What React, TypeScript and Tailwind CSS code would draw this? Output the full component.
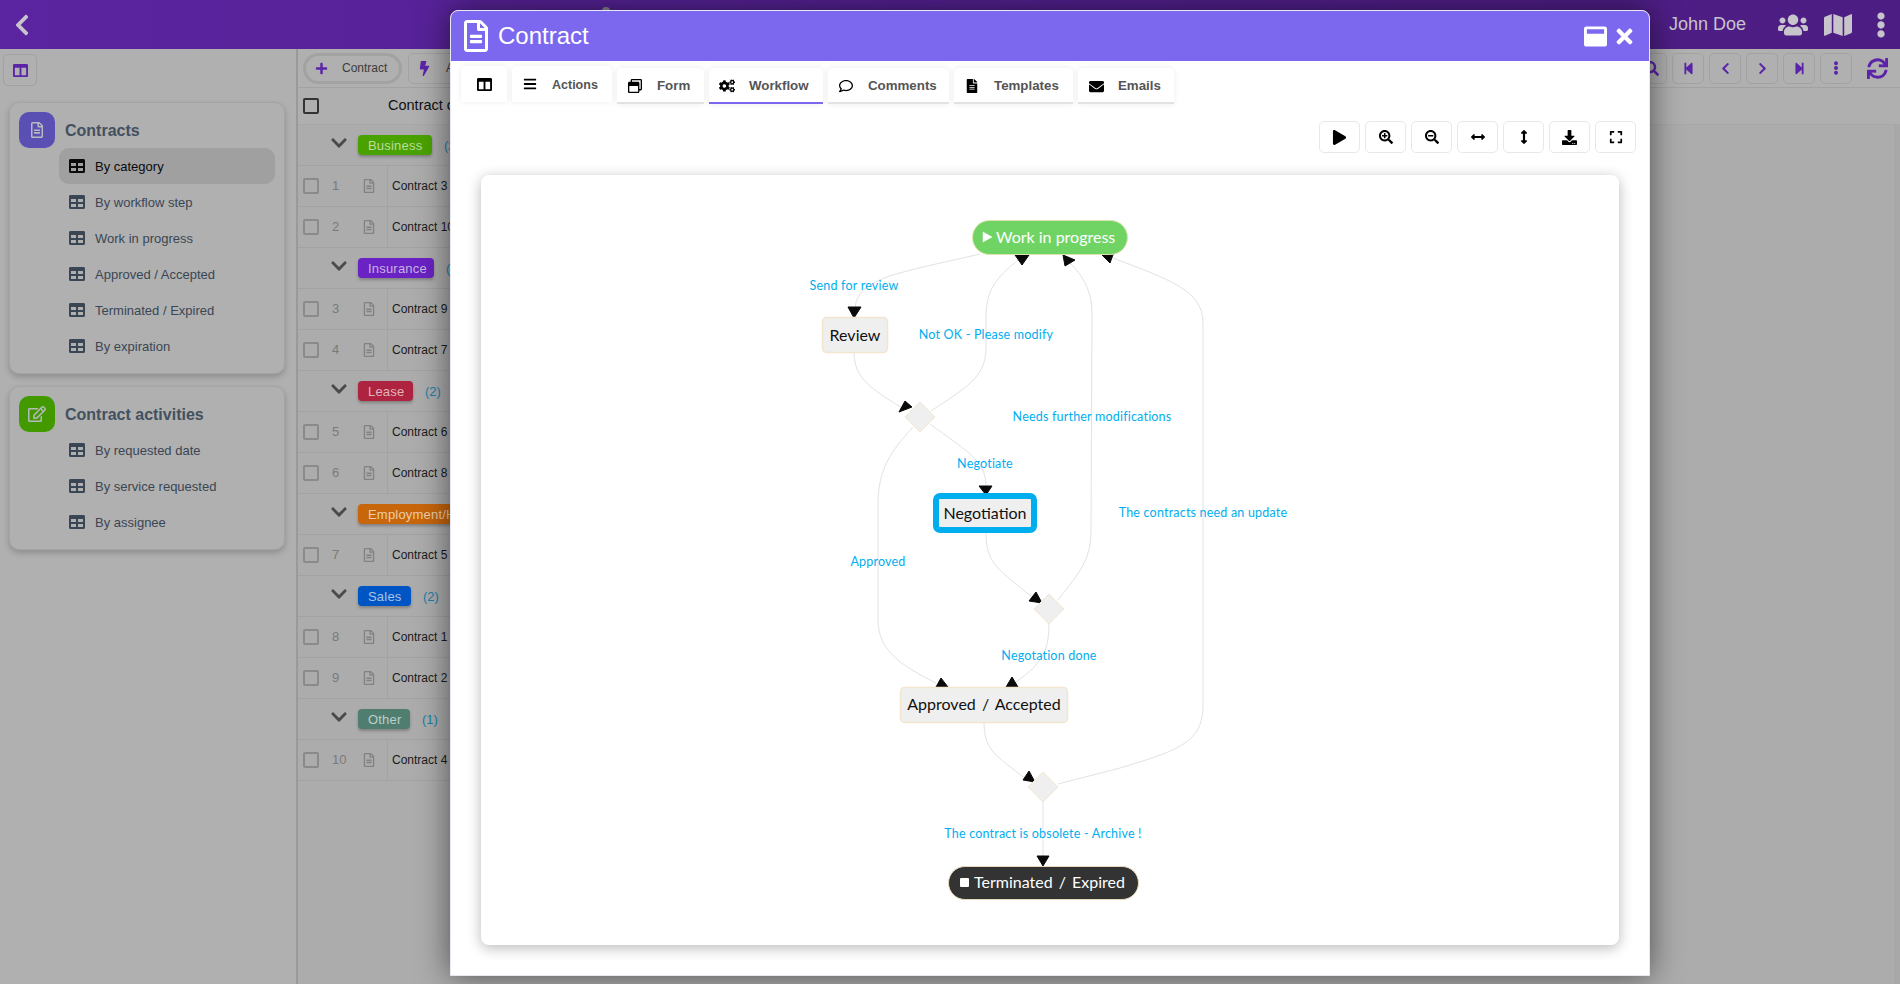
import React from "react";
import {
  FaChevronLeft, FaChevronRight, FaChevronDown, FaColumns, FaTable, FaRegFileAlt, FaFileAlt, FaRegEdit, FaPlus, FaBolt,
  FaBars, FaRegWindowRestore, FaCogs, FaRegComment, FaEnvelope, FaWindowMaximize, FaTimes, FaPlay, FaSearchPlus, FaSearchMinus,
  FaArrowsAltH, FaArrowsAltV, FaDownload, FaExpand, FaUsers, FaMap, FaEllipsisV, FaSearch, FaStepBackward, FaStepForward, FaSync,
} from "react-icons/fa";

function MenuCard({ icon, iconBg, title, items, active }: { icon: React.ReactNode; iconBg: string; title: string; items: string[]; active?: string }) {
  return (
    <div className="ml-[9px] mr-[11px] rounded-[10px] border border-[#a4a4a4] bg-[#b0b0b0] px-[9px] pt-[9px] pb-[9px] shadow-[0_3px_6px_rgba(0,0,0,0.2)]">
      <div className="flex h-9 items-center gap-[10px]">
        <div className={`flex h-9 w-9 items-center justify-center rounded-[10px] text-[#b8b8c0] ${iconBg}`}>{icon}</div>
        <span className="pt-[1px] text-[16px] font-bold text-[#44505f]">{title}</span>
      </div>
      {items.map((t) => (
        <div key={t} className={`ml-10 flex h-9 items-center gap-[10px] rounded-[10px] pl-[10px] text-[13px] ${t === active ? "bg-[#a0a0a0] text-[#0a0a0a]" : "text-[#3a4654]"}`}>
          <FaTable size={16} />
          <span className="pt-[2px]">{t}</span>
        </div>
      ))}
    </div>
  );
}

function Check() {
  return <div className="h-[16px] w-[16px] shrink-0 rounded-[2px] border-2 border-[#8a8a8a]" />;
}

function Row({ n, name }: { n: number; name: string }) {
  return (
    <div className="flex h-[41px] items-center border-b border-[#a2a2a2] pl-[5px]">
      <Check />
      <span className="w-[32px] pl-[13px] text-[13px] text-[#7a7a7a]">{n}</span>
      <div className="flex w-[36px] justify-center text-[#828282]"><FaRegFileAlt size={14} /></div>
      <div className="flex h-full items-center border-l border-[#a2a2a2] pl-[4px] text-[12px] whitespace-nowrap text-[#1a1a1a]">{name}</div>
    </div>
  );
}

function Group({ label, bg, text, count, w }: { label: string; bg: string; text: string; count: string; w: string }) {
  return (
    <div className="flex h-[41px] items-center border-b border-[#a2a2a2] pl-[27px]">
      <FaChevronDown size={18} className="mb-[4px] w-[28px] text-[#4a4a4a]" />
      <div className={`ml-[5px] flex h-[20px] shrink-0 items-center rounded-[4px] pl-[10px] pt-[2px] text-[13px] tracking-[0.2px] whitespace-nowrap shadow-[0_2px_3px_rgba(0,0,0,0.25)] ${bg} ${text} ${w}`}>{label}</div>
      <span className="ml-[12px] pt-[2px] text-[13px] text-[#1a7fa8]">{count}</span>
    </div>
  );
}

function ToolBtn({ children, className = "" }: { children: React.ReactNode; className?: string }) {
  return <div className={`flex h-[31px] items-center justify-center rounded-[5px] border border-[#a2a2a2] text-[#5b24a8] ${className}`}>{children}</div>;
}

function Tab({ icon, label, active, w }: { icon: React.ReactNode; label: string; active?: boolean; w: string }) {
  return (
    <div className={`flex h-[36px] items-center gap-[14px] rounded-t-[5px] border-b-2 bg-white pl-[10px] pt-[2px] text-[13.3px] font-bold text-[#555] shadow-[0_0_6px_rgba(0,0,0,0.08)] ${active ? "border-[#7b68ee]" : "border-[#e2e2e2]"} ${w}`}>
      <span className="flex w-[16px] justify-center text-black">{icon}</span>
      <span>{label}</span>
    </div>
  );
}

function DiaBtn({ children }: { children: React.ReactNode }) {
  return <div className="flex h-[32px] w-[41px] items-center justify-center rounded-[5px] border border-[#e8e8e8] bg-white text-black">{children}</div>;
}

const edges = [
  "M980 254 C950 261 925 266 900 273 C870 281 855 292 855 310",
  "M854 352 C854 378 870 388 902 408",
  "M931 411 C965 388 986 378 986 348 L986 317 C986 290 996 278 1018 260",
  "M1058 600 C1080 572 1091 560 1091 530 L1092 313 C1092 290 1082 275 1070 263",
  "M1058 784 L1120 768 C1180 750 1203 742 1203 705 L1203 323 C1203 290 1170 280 1113 258",
  "M930 424 C965 450 986 460 986 486",
  "M913 427 C890 452 878 470 878 505 L878 620 C878 650 900 665 936 683",
  "M986 533 C986 565 1000 570 1033 598",
  "M1049 623 C1049 655 1040 665 1012 685",
  "M984 722 C984 750 995 755 1026 779",
  "M1043 802 L1043 860",
];
const arrows = [
  "848,307 861,307 854,318",
  "899,412 912,407 905,401",
  "1015,255 1029,255 1022,265",
  "1063,255 1075,260 1065,266",
  "1102,255 1114,252 1110,263",
  "979,486 992,486 986,495",
  "936,687 948,687 941,678",
  "1029,601 1042,603 1036,592",
  "1006,687 1018,687 1012,677",
  "1023,780 1035,782 1029,771",
  "1037,856 1049,856 1043,866",
];
const labels: [string, number, number][] = [
  ["Send for review", 854, 290],
  ["Not OK - Please modify", 986, 339],
  ["Needs further modifications", 1092, 421],
  ["Negotiate", 985, 468],
  ["The contracts need an update", 1203, 517],
  ["Approved", 878, 566],
  ["Negotation done", 1049, 660],
  ["The contract is obsolete - Archive !", 1043, 838],
];
const diamonds = [[920, 417], [1049, 609], [1043, 787]];
const font = "Lato, 'Noto Sans', sans-serif";

function Workflow() {
  return (
    <svg viewBox="481 175 1138 770" className="block h-full w-full" style={{ fontFamily: font }}>
      {edges.map((d, i) => <path key={i} d={d} fill="none" stroke="#e2e2e2" strokeWidth={1} />)}
      {arrows.map((p, i) => <polygon key={i} points={p} fill="#0a0a0a" stroke="#0a0a0a" strokeLinejoin="round" />)}
      <rect x="972.5" y="220.5" width="155" height="34" rx="17" fill="#70d464" stroke="#dfe3b0" />
      <polygon points="983,232 983,242 992,237" fill="#fff" stroke="#fff" strokeWidth="0.5" />
      <text x="996" y="243" fontSize="16" fill="#fff">Work in progress</text>
      <rect x="822.5" y="317.5" width="65" height="35" rx="4" fill="#efefef" stroke="#f3e6cf" strokeWidth="1.5" />
      <text x="855" y="341" textAnchor="middle" fontSize="16" fill="#111">Review</text>
      <rect x="936" y="496" width="98" height="34" rx="4" fill="#efefef" stroke="#00adef" strokeWidth="6" />
      <text x="985" y="519" textAnchor="middle" fontSize="16" fill="#111">Negotiation</text>
      <rect x="900.5" y="687.5" width="167" height="35" rx="4" fill="#efefef" stroke="#f3e6cf" strokeWidth="1.5" />
      <text x="984" y="710" textAnchor="middle" fontSize="16" fill="#111" wordSpacing="2">Approved / Accepted</text>
      <rect x="948.5" y="866.5" width="190" height="33" rx="16.5" fill="#333" stroke="#e8d8b8" />
      <rect x="960" y="878" width="9" height="9" rx="1" fill="#fff" />
      <text x="974" y="888" fontSize="16" fill="#fff" wordSpacing="2">Terminated / Expired</text>
      {diamonds.map(([x, y], i) => (
        <polygon key={i} points={`${x - 15},${y} ${x},${y - 15} ${x + 15},${y} ${x},${y + 15}`} fill="#efefef" stroke="#f3e6cf" />
      ))}
      {labels.map(([t, x, y]) => <text key={t} x={x} y={y} textAnchor="middle" fontSize="12.5" letterSpacing="0.2" fill="#00aeef">{t}</text>)}
    </svg>
  );
}

export default function App() {
  const rows: React.ReactNode[] = [
    <Group key="g1" label="Business" bg="bg-[#4aa200]" text="text-[#b9dca0]" count="(2)" w="w-[74px]" />,
    <Row key="1" n={1} name="Contract 3" />,
    <Row key="2" n={2} name="Contract 10" />,
    <Group key="g2" label="Insurance" bg="bg-[#6a22c4]" text="text-[#c6b4e2]" count="(2)" w="w-[76px]" />,
    <Row key="3" n={3} name="Contract 9" />,
    <Row key="4" n={4} name="Contract 7" />,
    <Group key="g3" label="Lease" bg="bg-[#ae2440]" text="text-[#e0b4bc]" count="(2)" w="w-[55px]" />,
    <Row key="5" n={5} name="Contract 6" />,
    <Row key="6" n={6} name="Contract 8" />,
    <Group key="g4" label="Employment/HR" bg="bg-[#c8660c]" text="text-[#eccdaa]" count="(1)" w="w-[130px]" />,
    <Row key="7" n={7} name="Contract 5" />,
    <Group key="g5" label="Sales" bg="bg-[#0055c4]" text="text-[#aac4e6]" count="(2)" w="w-[53px]" />,
    <Row key="8" n={8} name="Contract 1" />,
    <Row key="9" n={9} name="Contract 2" />,
    <Group key="g6" label="Other" bg="bg-[#4f7d70]" text="text-[#bcd0ca]" count="(1)" w="w-[52px]" />,
    <Row key="10" n={10} name="Contract 4" />,
  ];
  return (
    <div className="relative h-[984px] w-[1900px] overflow-hidden bg-[#b0b0b0]" style={{ fontFamily: "'Liberation Sans', sans-serif" }}>
      <header className="flex h-[49px] items-center bg-gradient-to-r from-[#5b24a0] to-[#4c1d82] pl-[10px] pr-[6px] text-[#c8c4cc]">
        <FaChevronLeft size={24} />
        <div className="ml-auto flex items-center">
          <span className="text-[18px]">John Doe</span>
          <FaUsers size={30} className="ml-[32px]" />
          <FaMap size={28} className="ml-[16px]" />
          <FaEllipsisV size={26} className="ml-[16px]" />
        </div>
      </header>
      <div className="flex h-[935px]">
        <aside className="w-[296px] shrink-0">
          <div className="ml-[3px] mt-[5px] mb-[16px] flex h-[32px] w-[34px] items-center justify-center rounded-[5px] border border-[#a2a2a2] text-[#5b24a8]"><FaColumns size={15} /></div>
          <MenuCard icon={<FaRegFileAlt size={16} />} iconBg="bg-[#5a4fb3]" title="Contracts" active="By category" items={["By category", "By workflow step", "Work in progress", "Approved / Accepted", "Terminated / Expired", "By expiration"]} />
          <div className="h-3" />
          <MenuCard icon={<FaRegEdit size={18} />} iconBg="bg-[#429a00]" title="Contract activities" items={["By requested date", "By service requested", "By assignee"]} />
        </aside>
        <main className="flex min-w-0 flex-1 flex-col border-l-2 border-[#9a9a9a]">
          <div className="flex h-[39px] shrink-0 items-center border-b border-[#a2a2a2] pl-[5px] pr-[12px]">
            <div className="flex h-[31px] w-[99px] items-center rounded-full border-[3px] border-[#a2a2a2] pl-[9px] text-[12px] text-[#3c3c3c]">
              <FaPlus size={13} className="text-[#5b24a8]" /><span className="ml-[14px]">Contract</span>
            </div>
            <ToolBtn className="ml-[6px] w-[90px] justify-start pl-[8px]"><FaBolt size={15} /><span className="ml-[14px] text-[12px] text-[#3c3c3c]">Actions</span></ToolBtn>
            <div className="ml-auto flex items-center gap-[5px]">
              <ToolBtn className="w-[32px]"><FaSearch size={15} /></ToolBtn>
              <ToolBtn className="w-[32px]"><FaStepBackward size={13} /></ToolBtn>
              <ToolBtn className="w-[32px]"><FaChevronLeft size={13} /></ToolBtn>
              <ToolBtn className="w-[32px]"><FaChevronRight size={13} /></ToolBtn>
              <ToolBtn className="w-[32px]"><FaStepForward size={13} /></ToolBtn>
              <ToolBtn className="w-[32px]"><FaEllipsisV size={14} /></ToolBtn>
              <FaSync size={21} className="ml-[10px] text-[#5b24a8]" />
            </div>
          </div>
          <div className="flex h-[37px] shrink-0 items-center border-b border-[#a8a8a8] bg-[#afafaf] pl-[5px]">
            <div className="h-[16px] w-[16px] rounded-[2px] border-2 border-[#333]" />
            <span className="ml-[69px] text-[14.5px] text-[#111]">Contract category</span>
          </div>
          <div className="flex min-h-0 flex-1 bg-[#acacac]">
            <div className="w-[400px]">{rows}</div>
            <div className="ml-auto w-[6px] bg-[#a8a8a8]" />
          </div>
        </main>
      </div>

      <div className="absolute left-[602px] top-[7px] h-[8px] w-[8px] rounded-full bg-[#8a8a8a]" />
      <div className="absolute left-[450px] top-[10px] flex h-[966px] w-[1200px] flex-col overflow-hidden rounded-t-[8px] border border-[#e8e8f0] bg-white shadow-[0_0_32px_rgba(0,0,0,0.55)]">
        <div className="flex h-[50px] shrink-0 items-center bg-[#7b68ee] pl-[9px] pr-[13px] text-white">
          <FaRegFileAlt size={32} />
          <span className="ml-[6px] text-[24px]">Contract</span>
          <FaWindowMaximize size={23} className="ml-auto" />
          <FaTimes size={23} className="ml-[6px]" />
        </div>
        <div className="flex h-[49px] shrink-0 items-start gap-[5px] pl-[10px] pt-[5px]">
          <div className="flex h-[36px] w-[46px] items-center justify-center rounded-t-[5px] bg-white text-black shadow-[0_0_6px_rgba(0,0,0,0.08)]"><FaColumns size={15} /></div>
          <div className="flex h-[36px] w-[100px] items-center gap-[15px] rounded-t-[5px] bg-white pl-[11px] text-[12.5px] font-bold text-[#555] shadow-[0_0_6px_rgba(0,0,0,0.08)]"><FaBars size={14} className="text-black" /><span className="pt-[2px]">Actions</span></div>
          <div className="mt-[2px] flex gap-[5px]">
            <Tab w="w-[87px]" icon={<FaRegWindowRestore size={14} />} label="Form" />
            <Tab w="w-[114px]" active icon={<FaCogs size={18} />} label="Workflow" />
            <Tab w="w-[121px]" icon={<FaRegComment size={14} />} label="Comments" />
            <Tab w="w-[119px]" icon={<FaFileAlt size={14} />} label="Templates" />
            <Tab w="w-[96px]" icon={<FaEnvelope size={15} />} label="Emails" />
          </div>
        </div>
        <div className="mt-[11px] flex h-[32px] shrink-0 justify-end gap-[5px] pr-[13px]">
          <DiaBtn><FaPlay size={15} /></DiaBtn>
          <DiaBtn><FaSearchPlus size={14} /></DiaBtn>
          <DiaBtn><FaSearchMinus size={14} /></DiaBtn>
          <DiaBtn><FaArrowsAltH size={14} /></DiaBtn>
          <DiaBtn><FaArrowsAltV size={14} /></DiaBtn>
          <DiaBtn><FaDownload size={15} /></DiaBtn>
          <DiaBtn><FaExpand size={14} /></DiaBtn>
        </div>
        <div className="ml-[30px] mt-[22px] h-[770px] w-[1138px] rounded-[8px] bg-white shadow-[0_3px_14px_rgba(0,0,0,0.28)]">
          <Workflow />
        </div>
      </div>
    </div>
  );
}
